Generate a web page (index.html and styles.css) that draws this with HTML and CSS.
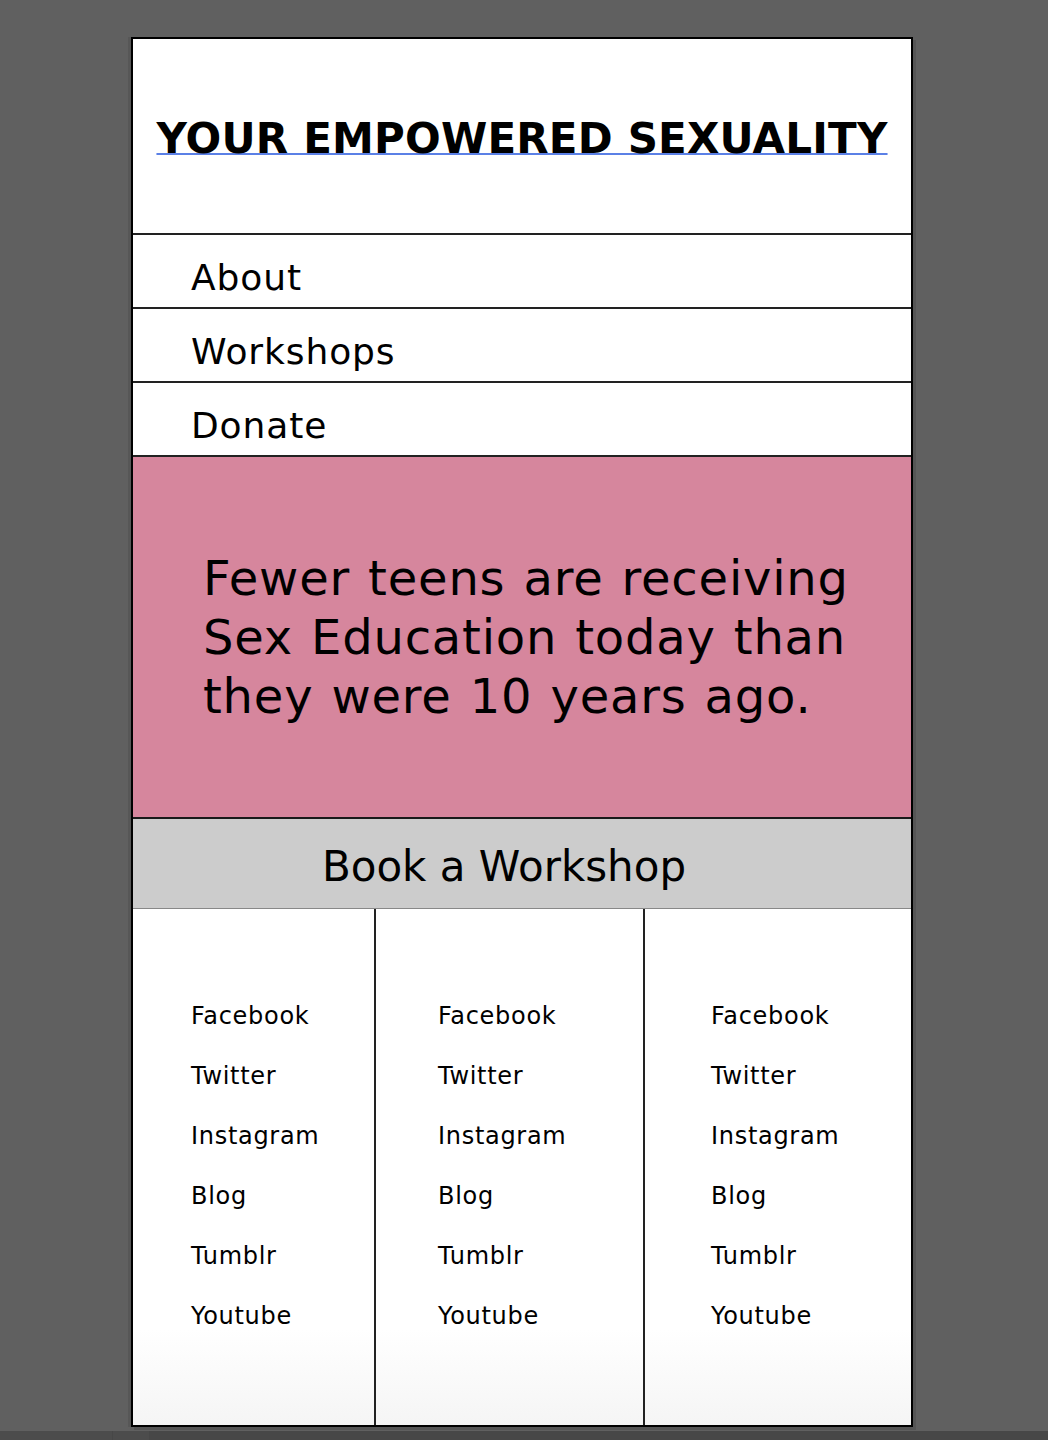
FILE: index.html
```html
<!DOCTYPE html>
<html lang="en">
<head>
<meta charset="utf-8">
<title>Your Empowered Sexuality</title>
<link rel="stylesheet" href="styles.css">
</head>
<body>
<div class="stage">
  <div class="page">
    <header class="header">
      <h1 class="title"><a href="#">YOUR EMPOWERED SEXUALITY</a></h1>
    </header>
    <nav class="nav">
      <a class="nav-item" href="#">About</a>
      <a class="nav-item" href="#">Workshops</a>
      <a class="nav-item" href="#">Donate</a>
    </nav>
    <section class="hero">
      <p class="hero-text">Fewer teens are receiving<br>Sex Education today than<br>they were 10 years ago.</p>
    </section>
    <section class="cta">
      <a class="cta-link" href="#">Book a Workshop</a>
    </section>
    <footer class="footer">
      <ul class="col col-1">
        <li>Facebook</li><li>Twitter</li><li>Instagram</li><li>Blog</li><li>Tumblr</li><li>Youtube</li>
      </ul>
      <ul class="col col-2">
        <li>Facebook</li><li>Twitter</li><li>Instagram</li><li>Blog</li><li>Tumblr</li><li>Youtube</li>
      </ul>
      <ul class="col col-3">
        <li>Facebook</li><li>Twitter</li><li>Instagram</li><li>Blog</li><li>Tumblr</li><li>Youtube</li>
      </ul>
    </footer>
  </div>
</div>
<div class="statusbar"><span class="seg seg-a"></span><span class="seg seg-b"></span></div>
</body>
</html>
```
FILE: styles.css
```css
html, body {
  margin: 0;
  padding: 0;
}
body {
  background: #606060;
  font-family: "DejaVu Sans", Verdana, sans-serif;
  color: #000;
  height: 1440px;
  overflow: hidden;
  display: flex;
  flex-direction: column;
}
.stage {
  flex: 1;
  padding-top: 37px;
  padding-left: 131px;
}
.page {
  width: 782px;
  box-sizing: border-box;
  border: 2px solid #000;
  background: #fff;
  box-shadow: 3px 3px 0 #555, -3px 0 0 #575757;
}
a {
  color: inherit;
  text-decoration: none;
}
.header {
  height: 196px;
  box-sizing: border-box;
  padding-top: 75px;
  border-bottom: 2px solid #222;
  text-align: center;
}
.title {
  margin: 0;
  font-size: 42px;
  line-height: 49px;
  font-weight: bold;
  letter-spacing: 0.2px;
}
.title a {
  text-decoration: underline;
  text-decoration-color: #5b80e6;
  text-decoration-thickness: 2px;
  text-underline-offset: 0px;
  text-decoration-skip-ink: none;
}
.nav {
  display: flex;
  flex-direction: column;
}
.nav-item {
  display: block;
  height: 74px;
  box-sizing: border-box;
  padding: 22px 0 0 58px;
  font-size: 36px;
  line-height: 42px;
  letter-spacing: 0.9px;
  border-bottom: 2px solid #222;
}
.hero {
  height: 362px;
  box-sizing: border-box;
  background: #d6869d;
  border-bottom: 2px solid #1a1a1a;
  padding: 92px 0 0 70px;
}
.hero-text {
  margin: 0;
  font-size: 48px;
  line-height: 59px;
  letter-spacing: 0.8px;
  word-spacing: 2px;
}
.cta {
  height: 90px;
  box-sizing: border-box;
  background: #cccccc;
  border-bottom: 1px solid #888;
  text-align: center;
  padding: 23px 36px 0 0;
}
.cta-link {
  font-size: 42px;
  line-height: 49px;
}
.footer {
  display: grid;
  grid-template-columns: 241px 269px 1fr;
  height: 516px;
  background: linear-gradient(to bottom, #fff 0, #fff 420px, #f5f5f5 100%);
}
.col {
  list-style: none;
  margin: 0;
  padding: 77px 0 0 58px;
  font-size: 24px;
  line-height: 60px;
  letter-spacing: 0.7px;
}
.col-2 {
  border-left: 2px solid #222;
  padding-left: 62px;
}
.col-3 {
  border-left: 2px solid #222;
  padding-left: 66px;
}
.statusbar {
  height: 9px;
  background: #474747;
  display: flex;
  gap: 1px;
}
.seg {
  display: block;
  height: 9px;
  background: #4c4c4c;
}
.seg-a { width: 112px; }
.seg-b { width: 36px; }
```
